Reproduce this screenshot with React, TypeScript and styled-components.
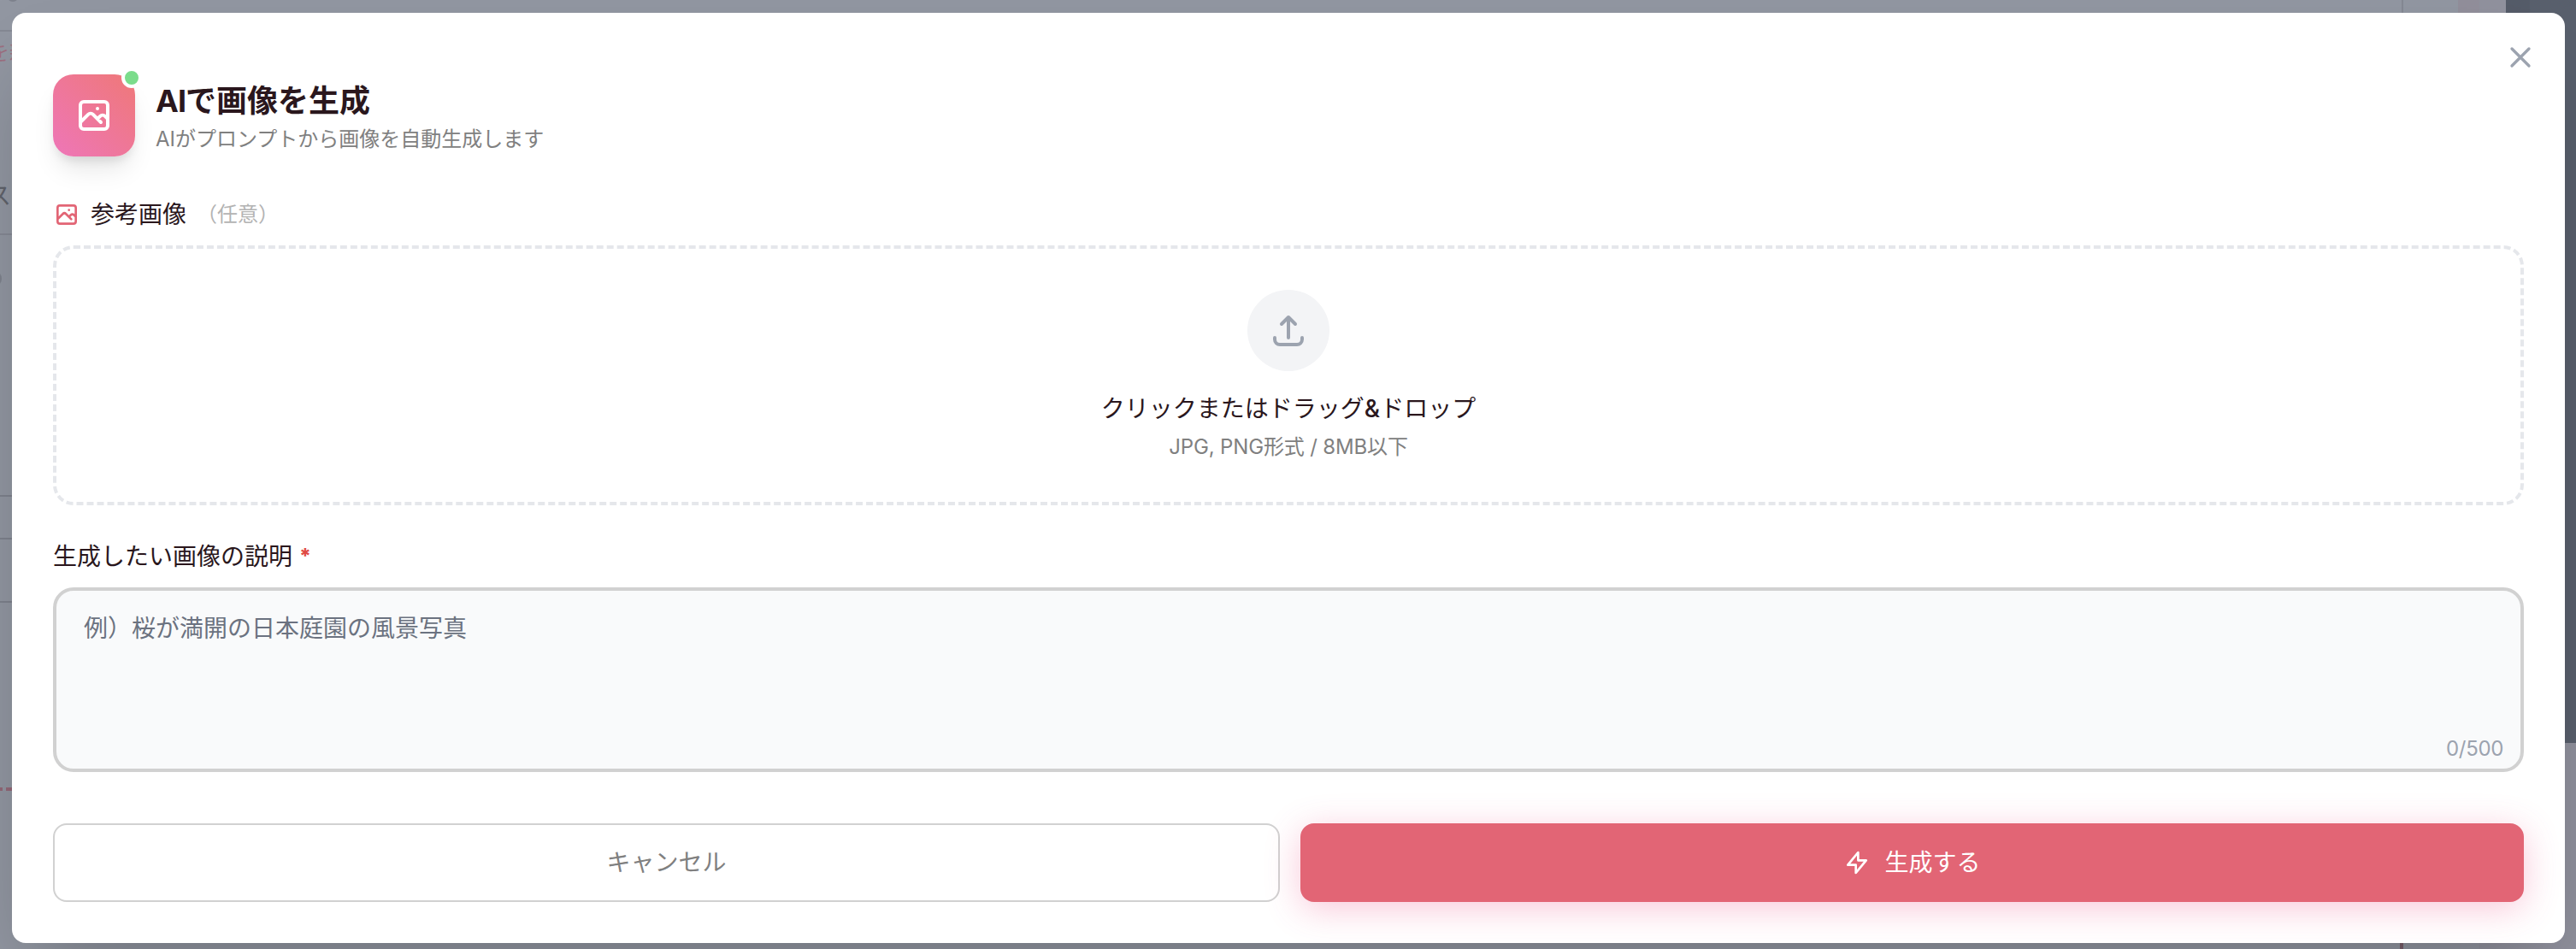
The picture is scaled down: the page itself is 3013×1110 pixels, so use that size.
import React from "react";
import styled, { createGlobalStyle, css } from "styled-components";

const Global = createGlobalStyle`
  * { box-sizing: border-box; }
  body {
    margin: 0;
    font-family: Inter, "Noto Sans CJK JP", sans-serif;
    -webkit-font-smoothing: antialiased;
  }
  button, textarea { font-family: inherit; }
  p, h2 { margin: 0; }
`;

const Page = styled.div`
  position: relative;
  display: grid;
  height: 1110px;
  padding: 15px 13px 7px 14px;
  overflow: hidden;
  background: #9297a2;
`;

const Backdrop = styled.div<{ $x: number; $y: number; $w: number; $h: number; $fill: string; $round?: boolean }>`
  position: absolute;
  left: ${(p) => p.$x}px;
  top: ${(p) => p.$y}px;
  width: ${(p) => p.$w}px;
  height: ${(p) => p.$h}px;
  border-radius: ${(p) => (p.$round ? "50%" : "0")};
  background: ${(p) => p.$fill};
`;

const BackText = styled.span<{ $x: number; $y: number; $size: number; $color: string }>`
  position: absolute;
  left: ${(p) => p.$x}px;
  top: ${(p) => p.$y}px;
  font-size: ${(p) => p.$size}px;
  line-height: 1;
  white-space: nowrap;
  color: ${(p) => p.$color};
`;

const Modal = styled.div`
  position: relative;
  display: flex;
  flex-direction: column;
  padding: 72px 48px 48px;
  border-radius: 16px;
  background: #fff;
  box-shadow: 0 50px 100px -24px rgba(0, 0, 0, 0.25);
`;

const CloseButton = styled.button`
  position: absolute;
  top: 32px;
  right: 32px;
  display: flex;
  padding: 0;
  border: 0;
  background: none;
  color: #9ca3af;
`;

const Header = styled.div`
  display: flex;
  align-items: center;
  gap: 24px;
  margin-bottom: 48px;
`;

const HeaderText = styled.div`
  padding-top: 6px;
`;

const Badge = styled.div`
  position: relative;
  display: flex;
  align-items: center;
  justify-content: center;
  width: 96px;
  height: 96px;
  border-radius: 24px;
  color: #fff;
  background: linear-gradient(to top right, #ee76b8, #ef7878);
  box-shadow: 0 20px 30px -6px rgba(0, 0, 0, 0.1), 0 8px 12px -4px rgba(0, 0, 0, 0.1);
`;

const StatusDot = styled.span`
  position: absolute;
  top: -8px;
  right: -8px;
  width: 24px;
  height: 24px;
  border: 4px solid #fff;
  border-radius: 50%;
  background: #7bdc8b;
`;

const Title = styled.h2`
  font-size: 36px;
  line-height: 50px;
  font-weight: 700;
  color: #2a171d;
`;

const TitleLatin = styled.span`
  letter-spacing: -1px;
`;

const Subtitle = styled.p`
  font-size: 24px;
  line-height: 40px;
  color: #808080;
`;

const FieldLabel = styled.div`
  display: flex;
  align-items: center;
  gap: 12px;
  height: 40px;
  margin-bottom: 16px;
  font-size: 28px;
  line-height: 40px;
  color: #2a171d;
`;

const LabelIcon = styled.span`
  display: flex;
  color: #e26575;
`;

const Optional = styled.span`
  font-size: 24px;
  color: #b3b3b3;
`;

const Required = styled.span`
  margin-left: -4px;
  font-size: 24px;
  font-weight: 800;
  color: #e04a44;
`;

const DropZone = styled.div`
  display: flex;
  flex-direction: column;
  align-items: center;
  height: 304px;
  margin-bottom: 40px;
  padding: 48px;
  border: 4px dashed #e5e7eb;
  border-radius: 24px;
`;

const UploadCircle = styled.div`
  display: flex;
  align-items: center;
  justify-content: center;
  width: 96px;
  height: 96px;
  margin-bottom: 24px;
  border-radius: 50%;
  background: #f3f4f6;
  color: #9ca3af;
`;

const DropText = styled.p`
  margin-bottom: 9px;
  font-size: 28px;
  line-height: 40px;
  color: #2a171d;
`;

const Amp = styled.span`
  font-weight: 500;
`;

const DropHint = styled.p`
  font-size: 24px;
  line-height: 32px;
  letter-spacing: -0.15px;
  color: #808080;
`;

const TextAreaWrap = styled.div`
  position: relative;
  display: flex;
  margin-bottom: 60px;
`;

const TextArea = styled.textarea`
  width: 100%;
  height: 216px;
  padding: 24px 32px;
  border: 4px solid #d1d1d1;
  border-radius: 24px;
  outline: 0;
  resize: none;
  background: #f9fafb;
  font-size: 28px;
  line-height: 40px;
  &::placeholder {
    color: #6b7280;
    opacity: 1;
  }
`;

const Counter = styled.span`
  position: absolute;
  right: 24px;
  bottom: 11px;
  font-size: 24px;
  line-height: 32px;
  letter-spacing: -0.35px;
  color: #9ca3af;
`;

const Actions = styled.div`
  display: flex;
  gap: 24px;
  height: 92px;
`;

const Button = styled.button<{ $primary?: boolean }>`
  display: flex;
  flex: 1;
  align-items: center;
  justify-content: center;
  gap: 16px;
  padding: 0 32px;
  border-radius: 16px;
  font-size: 28px;
  line-height: 40px;
  ${(p) =>
    p.$primary
      ? css`
          border: 0;
          background: #e26575;
          color: #fff;
          box-shadow: 0 8px 40px rgba(236, 72, 130, 0.3);
        `
      : css`
          border: 2px solid #d1d1d1;
          background: #fff;
          color: #808080;
        `}
`;

const paths = {
  photo:
    "M4 16l4.586-4.586a2 2 0 012.828 0L16 16m-2-2l1.586-1.586a2 2 0 012.828 0L20 14m-6-6h.01M6 20h12a2 2 0 002-2V6a2 2 0 00-2-2H6a2 2 0 00-2 2v12a2 2 0 002 2z",
  upload: "M4 16v1a3 3 0 003 3h10a3 3 0 003-3v-1m-4-8l-4-4m0 0L8 8m4-4v12",
  close: "M6 18L18 6M6 6l12 12",
  bolt: "M13 10V3L4 14h7v7l9-11h-7z",
};

const Icon = ({ name, size }: { name: keyof typeof paths; size: number }) => (
  <svg
    width={size}
    height={size}
    viewBox="0 0 24 24"
    fill="none"
    stroke="currentColor"
    strokeWidth={2}
    strokeLinecap="round"
    strokeLinejoin="round"
  >
    <path d={paths[name]} />
  </svg>
);

export default function App() {
  return (
    <>
      <Global />
      <Page>
        <Backdrop $x={8} $y={-12} $w={14} $h={14} $fill="#7e828d" $round />
        <Backdrop $x={0} $y={35} $w={14} $h={2} $fill="#858994" />
        <Backdrop $x={0} $y={273} $w={14} $h={2} $fill="#858994" />
        <Backdrop $x={-18} $y={316} $w={20} $h={20} $fill="#7e828d" $round />
        <Backdrop $x={0} $y={579} $w={14} $h={2} $fill="#7e828d" />
        <Backdrop $x={0} $y={629} $w={14} $h={2} $fill="#7e828d" />
        <Backdrop $x={0} $y={703} $w={14} $h={2} $fill="#7e828d" />
        <Backdrop $x={0} $y={921} $w={3} $h={4} $fill="#936878" />
        <Backdrop $x={7} $y={921} $w={7} $h={4} $fill="#936878" />
        <Backdrop $x={2809} $y={0} $w={2} $h={15} $fill="#858994" />
        <Backdrop $x={2875} $y={0} $w={25} $h={15} $fill="#928f9b" />
        <Backdrop $x={2900} $y={0} $w={113} $h={1110} $fill="#91929e" />
        <Backdrop $x={2931} $y={0} $w={28} $h={869} $fill="#555c69" />
        <Backdrop $x={2959} $y={0} $w={54} $h={869} $fill="#59606d" />
        <Backdrop $x={2807} $y={1100} $w={4} $h={10} $fill="#79606d" />
        <BackText $x={-13} $y={50} $size={24} $color="#9d6f80">を新</BackText>
        <BackText $x={-15} $y={215} $size={28} $color="#60636c">ス</BackText>
        <Modal>
          <CloseButton aria-label="閉じる">
            <Icon name="close" size={40} />
          </CloseButton>
          <Header>
            <Badge>
              <Icon name="photo" size={48} />
              <StatusDot />
            </Badge>
            <HeaderText>
              <Title>
                <TitleLatin>AI</TitleLatin>で画像を生成
              </Title>
              <Subtitle>AIがプロンプトから画像を自動生成します</Subtitle>
            </HeaderText>
          </Header>
          <FieldLabel>
            <LabelIcon>
              <Icon name="photo" size={32} />
            </LabelIcon>
            <span>参考画像</span>
            <Optional>（任意）</Optional>
          </FieldLabel>
          <DropZone>
            <UploadCircle>
              <Icon name="upload" size={48} />
            </UploadCircle>
            <DropText>
              クリックまたはドラッグ<Amp>&amp;</Amp>ドロップ
            </DropText>
            <DropHint>JPG, PNG形式 / 8MB以下</DropHint>
          </DropZone>
          <FieldLabel>
            <span>生成したい画像の説明</span>
            <Required>*</Required>
          </FieldLabel>
          <TextAreaWrap>
            <TextArea placeholder="例）桜が満開の日本庭園の風景写真" />
            <Counter>0/500</Counter>
          </TextAreaWrap>
          <Actions>
            <Button>キャンセル</Button>
            <Button $primary>
              <Icon name="bolt" size={32} />
              生成する
            </Button>
          </Actions>
        </Modal>
      </Page>
    </>
  );
}
